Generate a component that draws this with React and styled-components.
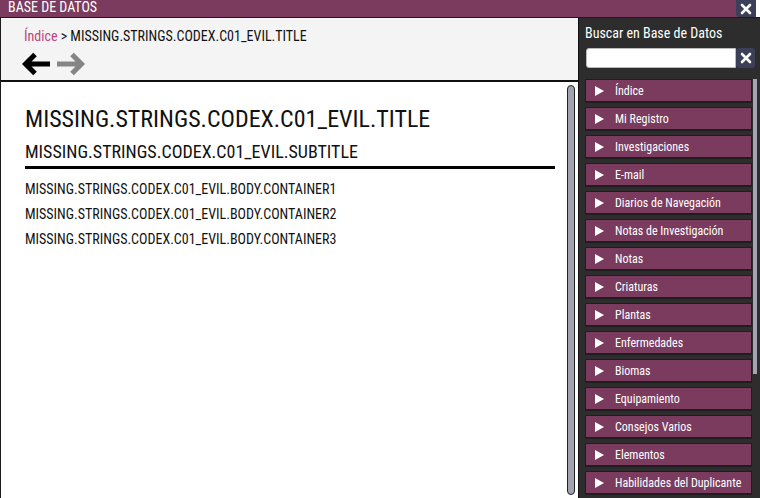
import React from "react";
import styled, { createGlobalStyle } from "styled-components";

const GlobalStyle = createGlobalStyle`
  html, body {
    margin: 0;
    padding: 0;
    background: #ffffff;
  }
  body {
    font-family: "Roboto Condensed", "Liberation Sans Narrow", "DejaVu Sans Condensed", Roboto, sans-serif;
  }
`;

const categories = [
  "Índice",
  "Mi Registro",
  "Investigaciones",
  "E-mail",
  "Diarios de Navegación",
  "Notas de Investigación",
  "Notas",
  "Criaturas",
  "Plantas",
  "Enfermedades",
  "Biomas",
  "Equipamiento",
  "Consejos Varios",
  "Elementos",
  "Habilidades del Duplicante",
];

const bodyLines = [
  "MISSING.STRINGS.CODEX.C01_EVIL.BODY.CONTAINER1",
  "MISSING.STRINGS.CODEX.C01_EVIL.BODY.CONTAINER2",
  "MISSING.STRINGS.CODEX.C01_EVIL.BODY.CONTAINER3",
];

const CloseIcon = ({ size = 12 }) => (
  <svg width={size} height={size} viewBox="0 0 12 12">
    <path d="M2 2 L10 10 M10 2 L2 10" stroke="#fff" strokeWidth="2.6" strokeLinecap="round" />
  </svg>
);

const Arrow = ({ color, flip }) => (
  <svg width="30" height="24" viewBox="0 0 30 24" style={flip ? { transform: "scaleX(-1)" } : undefined}>
    <path
      d="M29 12 H5 M14 2.5 L4.5 12 L14 21.5"
      stroke={color}
      strokeWidth="5"
      fill="none"
      strokeLinecap="butt"
      strokeLinejoin="miter"
    />
  </svg>
);

const TriangleIcon = () => (
  <svg width="9" height="10" viewBox="0 0 9 10">
    <path d="M0 0 L9 5 L0 10 Z" fill="#fff" />
  </svg>
);

const App = () => {
  return (
    <Window>
      <GlobalStyle />
      <TitleBar>
        <TitleText>BASE DE DATOS</TitleText>
        <CloseButton>
          <CloseIcon />
        </CloseButton>
      </TitleBar>
      <Main>
        <LeftPanel>
          <Header>
            <Breadcrumb>
              <Crumb>Índice</Crumb> &gt; MISSING.STRINGS.CODEX.C01_EVIL.TITLE
            </Breadcrumb>
            <NavArrows>
              <Arrow color="#000" />
              <Arrow color="#858585" flip />
            </NavArrows>
          </Header>
          <Content>
            <Article>
              <Title>MISSING.STRINGS.CODEX.C01_EVIL.TITLE</Title>
              <Subtitle>MISSING.STRINGS.CODEX.C01_EVIL.SUBTITLE</Subtitle>
              <Rule />
              {bodyLines.map((line) => (
                <BodyLine key={line}>{line}</BodyLine>
              ))}
            </Article>
            <ScrollTrack>
              <ScrollThumb />
            </ScrollTrack>
          </Content>
        </LeftPanel>
        <Sidebar>
          <SearchLabel>Buscar en Base de Datos</SearchLabel>
          <SearchRow>
            <SearchInput />
            <ClearButton>
              <CloseIcon />
            </ClearButton>
          </SearchRow>
          <ListArea>
            <CategoryList>
              {categories.map((c) => (
                <Category key={c}>
                  <Triangle>
                    <TriangleIcon />
                  </Triangle>
                  {c}
                </Category>
              ))}
            </CategoryList>
            <SideScroll />
          </ListArea>
        </Sidebar>
      </Main>
    </Window>
  );
};

const Window = styled.div`
  width: 760px;
  height: 498px;
  display: flex;
  flex-direction: column;
  overflow: hidden;
`;

const TitleBar = styled.div`
  height: 17px;
  display: flex;
  align-items: stretch;
  padding-right: 4px;
  background: linear-gradient(#7b3b5e, #7b3b5e) left / calc(100% - 4px) 100% no-repeat, #ffffff;
  border-bottom: 1px solid #1b1b1b;
`;

const TitleText = styled.div`
  flex: 1;
  color: #fff;
  font-size: 14px;
  line-height: 15px;
  padding-left: 8px;
`;

const CloseButton = styled.div`
  width: 20px;
  display: flex;
  align-items: center;
  justify-content: center;
  background: #3b3f58;
  border-radius: 0 0 3px 3px;
`;

const Main = styled.div`
  flex: 1;
  display: flex;
  min-height: 0;
`;

const LeftPanel = styled.div`
  width: 577px;
  display: flex;
  flex-direction: column;
  border-left: 1px solid #1b1b1b;
  border-right: 1px solid #111;
`;

const Header = styled.div`
  background: #f4f4f4;
  border-bottom: 2px solid #111;
  padding: 10px 0 0 23px;
  box-sizing: border-box;
  height: 64px;
`;

const Breadcrumb = styled.div`
  font-size: 14px;
  color: #111;
  line-height: 17px;
`;

const Crumb = styled.span`
  color: #c0447c;
`;

const NavArrows = styled.div`
  display: flex;
  gap: 5px;
  margin: 7px 0 0 -3px;
  height: 24px;
`;

const Content = styled.div`
  flex: 1;
  display: flex;
  background: #fff;
  min-height: 0;
`;

const Article = styled.div`
  flex: 1;
  padding: 23px 12px 0 24px;
`;

const Title = styled.div`
  font-size: 24px;
  color: #111;
  line-height: 28px;
`;

const Subtitle = styled.div`
  font-size: 18px;
  color: #111;
  line-height: 22px;
  margin-top: 8px;
`;

const Rule = styled.div`
  height: 3px;
  background: #000;
  margin: 3px 0 8px;
`;

const BodyLine = styled.div`
  font-size: 14px;
  color: #111;
  line-height: 25px;
`;

const ScrollTrack = styled.div`
  width: 8px;
  padding: 3px 3px 3px 0;
  display: flex;
`;

const ScrollThumb = styled.div`
  flex: 1;
  background: #a0a2b0;
  border: 1px solid #222;
  border-radius: 4px;
`;

const Sidebar = styled.div`
  flex: 1;
  background: #2d2d2d;
  display: flex;
  flex-direction: column;
  padding: 6px 0 0 6px;
`;

const SearchLabel = styled.div`
  color: #fff;
  font-size: 14px;
  line-height: 18px;
`;

const SearchRow = styled.div`
  display: flex;
  margin: 6px 5px 0 1px;
  height: 20px;
`;

const SearchInput = styled.div`
  flex: 1;
  background: #fff;
  border-radius: 3px 0 0 3px;
  border: 1px solid #bbb;
`;

const ClearButton = styled.div`
  width: 19px;
  display: flex;
  align-items: center;
  justify-content: center;
  background: #3b3f58;
  border-radius: 3px;
`;

const ListArea = styled.div`
  flex: 1;
  display: flex;
  margin-top: 11px;
  min-height: 0;
`;

const CategoryList = styled.div`
  flex: 1;
  display: flex;
  flex-direction: column;
  gap: 4px;
`;

const Category = styled.div`
  height: 21px;
  display: flex;
  align-items: center;
  background: #7b3b5e;
  border: 1px solid #1e1e1e;
  border-bottom-width: 2px;
  color: #fff;
  font-size: 12px;
  padding-left: 9px;
  flex-shrink: 0;
`;

const Triangle = styled.span`
  width: 20px;
  display: flex;
  align-items: center;
`;

const SideScroll = styled.div`
  width: 4px;
  height: 295px;
  background: #a3a5b3;
  margin: 0 3px 0 1px;
`;

export default App;
